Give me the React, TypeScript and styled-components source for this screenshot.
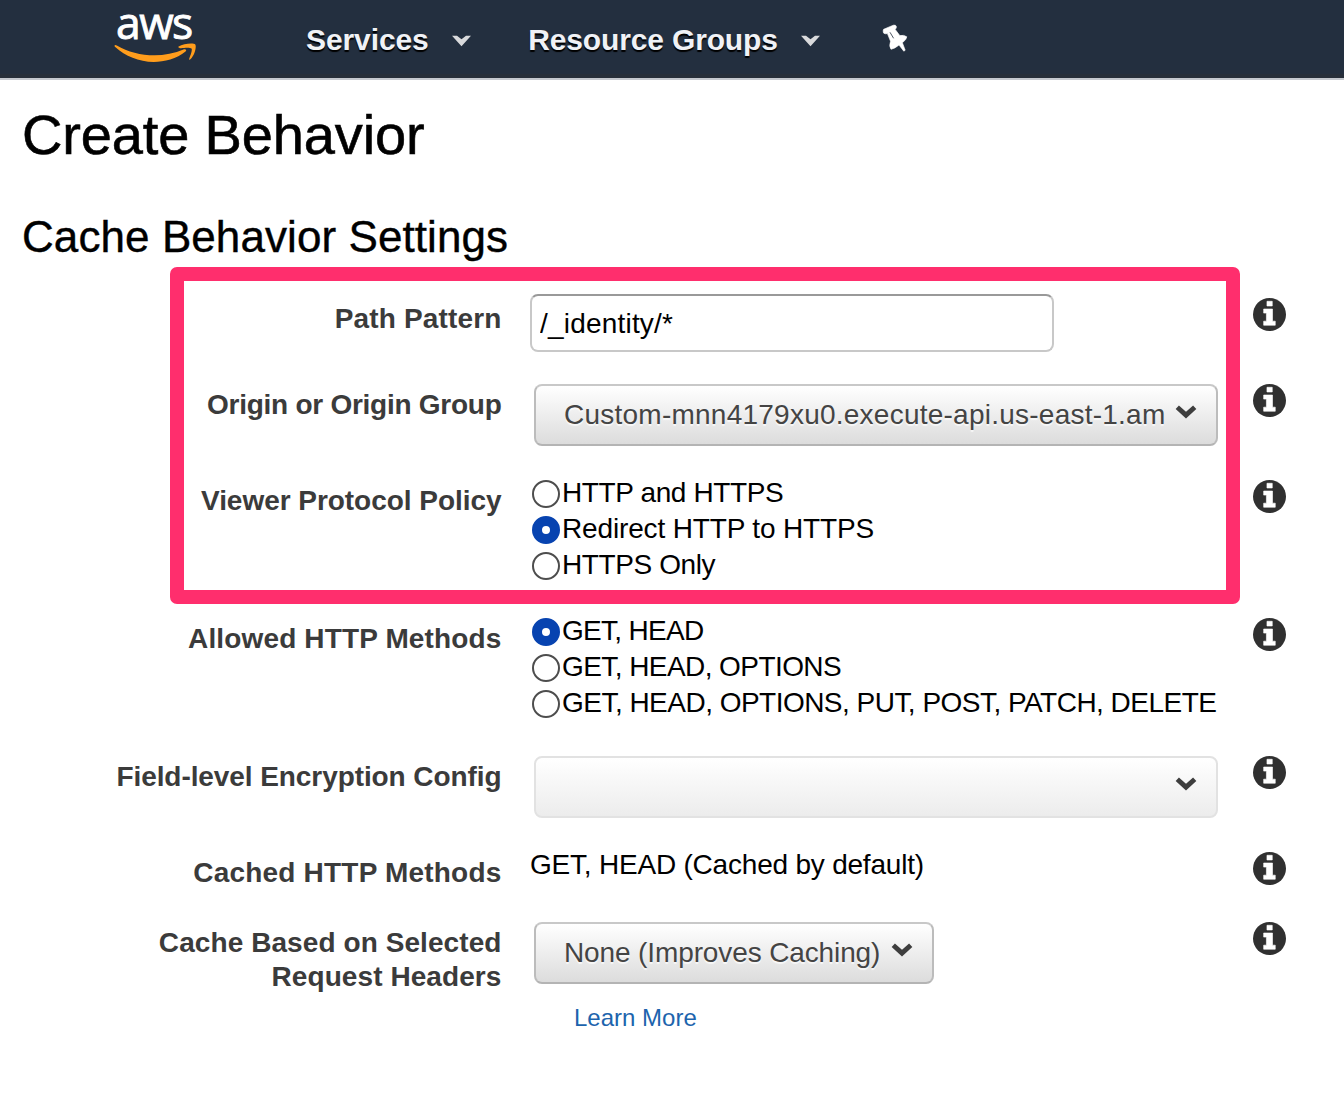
import React from "react";
import styled, { createGlobalStyle } from "styled-components";

const GlobalStyle = createGlobalStyle`
  * { box-sizing: border-box; }
  body {
    margin: 0;
    background: #fff;
    color: #000;
    font-family: "Liberation Sans", Arial, Helvetica, sans-serif;
    font-size: 28px;
  }
`;

const Page = styled.div`
  position: relative;
  width: 1344px;
  height: 1096px;
  background: #fff;
`;

const NavBar = styled.header`
  display: flex;
  align-items: flex-start;
  height: 80px;
  padding-left: 114px;
  background: #232f3f;
  border-bottom: 2px solid #c5c9cf;
  box-shadow: inset 0 -4px 0 #272f3a;
`;

const Logo = styled.div`
  display: flex;
  flex-direction: column;
  width: 82px;
  margin-right: 110px;
`;

const LogoWord = styled.span`
  height: 43px;
  padding-left: 2px;
  font-family: "Open Sans", "Noto Sans", sans-serif;
  font-size: 44.5px;
  font-weight: 400;
  line-height: 43px;
  letter-spacing: -1.6px;
  color: #fff;
  -webkit-text-stroke: 0.9px #fff;
`;

const NavItem = styled.div<{ $gap: number; $tracking?: number }>`
  display: flex;
  align-items: flex-start;
  gap: 23px;
  margin-right: ${(p) => p.$gap}px;
  color: #f0f2f6;
  font-size: 30px;
  font-weight: 700;
  line-height: 80px;
  letter-spacing: ${(p) => p.$tracking ?? 0}px;
  text-shadow: 0 2px 1px #000;
  white-space: nowrap;

  svg { margin-top: 35px; }
`;

const PinIcon = styled.svg`
  margin-top: 24px;
`;

const Title = styled.h1`
  margin: 23px 0 0 22px;
  font-size: 56px;
  font-weight: 400;
  line-height: 64px;
  letter-spacing: -0.15px;
  -webkit-text-stroke: 0.6px #000;
`;

const Subtitle = styled.h2`
  margin: 44px 0 0 22px;
  font-size: 44px;
  font-weight: 400;
  line-height: 52px;
  letter-spacing: 0.08px;
  -webkit-text-stroke: 0.4px #000;
`;

const Form = styled.main`
  margin-top: 29px;
`;

const Row = styled.section<{ $height: number }>`
  display: grid;
  grid-template-columns: 501.5px 722.5px 33px;
  column-gap: 29px;
  height: ${(p) => p.$height}px;
`;

const InfoCell = styled.div`
  margin-left: -29px;
  padding-top: 6px;

  svg { display: block; }
`;

const Label = styled.div<{ $tracking?: number }>`
  padding-top: 10px;
  color: #3b3b3b;
  font-weight: 700;
  line-height: 34px;
  text-align: right;
  white-space: nowrap;
  letter-spacing: ${(p) => p.$tracking ?? 0}px;
`;

const Control = styled.div<{ $top?: number; $left?: number }>`
  margin-left: -0.5px;
  padding: ${(p) => p.$top ?? 0}px 0 0 ${(p) => p.$left ?? 0}px;
`;

const TextInput = styled.input`
  display: block;
  width: 524px;
  height: 58px;
  padding: 2px 8px 0;
  border: 2px solid #c8c8c8;
  border-top-color: #999;
  border-radius: 8px;
  outline: none;
  background: #fff;
  color: #000;
  font: inherit;
  letter-spacing: 0.2px;
`;

const SelectButton = styled.button<{ $width: number; $tracking?: number }>`
  display: flex;
  align-items: flex-start;
  justify-content: space-between;
  width: ${(p) => p.$width}px;
  height: 62px;
  padding: 0 19px 0 28px;
  border: 2px solid #bdbdbd;
  border-color: #c8c8c8 #bcbcbc #b4b4b4;
  border-radius: 8px;
  background: linear-gradient(#fff, #dcdcdc);
  color: #444;
  font: inherit;
  line-height: 58px;
  white-space: nowrap;
  letter-spacing: ${(p) => p.$tracking ?? 0}px;
  text-shadow: 0 2px 1px rgba(255, 255, 255, 0.7);

  svg { margin-top: 19px; flex: none; }

  &:disabled {
    border-color: #e2e2e2;
    background: linear-gradient(#fff, #ececec);
  }
`;

const RadioOption = styled.label<{ $tracking?: number }>`
  display: flex;
  height: 36px;
  line-height: 38px;
  white-space: nowrap;
  letter-spacing: ${(p) => p.$tracking ?? 0}px;
`;

const Radio = styled.input`
  appearance: none;
  flex: none;
  width: 28px;
  height: 28px;
  margin: 6px 2px 0;
  border: 2px solid #4d4d4d;
  border-radius: 50%;
  background: #fff;

  &:checked {
    border: 10px solid #0743b0;
  }
`;

const StaticText = styled.div`
  line-height: 38px;
  letter-spacing: -0.21px;
`;

const LearnMore = styled.a`
  display: block;
  margin: 20px 0 0 40px;
  color: #1d64ad;
  font-size: 24px;
  line-height: 28px;
  text-decoration: none;
`;

const Highlight = styled.div`
  position: absolute;
  left: 170px;
  top: 267px;
  width: 1070px;
  height: 337px;
  border: 14px solid #ff2e6d;
  border-radius: 7px;
  pointer-events: none;
`;

const NavCaret = () => (
  <svg width="19" height="12" viewBox="0 0 19 12">
    <path d="M0 .8h5L9.500 4.200 14 .8h5L9.500 11.200z" fill="#d9dadc" />
  </svg>
);

const Chevron = () => (
  <svg width="22" height="14" viewBox="0 0 22 14">
    <path d="M2.300 2.300L11 10.100 19.700 2.300" fill="none" stroke="#3e3e3e" strokeWidth="4.900" />
  </svg>
);

const Info = () => (
  <InfoCell>
    <svg width="33" height="33" viewBox="0 128 1536 1536">
      <circle cx="768" cy="896" r="768" fill="#303030" />
      <path
        fill="#fff"
        stroke="#fff"
        strokeWidth="28"
        d="M1036 1396v-190h-128v-566h-412v190h128v376h-128v190zM896 500v-220h-246v220z"
      />
    </svg>
  </InfoCell>
);

type Option = { text: string; tracking: number; on?: boolean };

const protocols: Option[] = [
  { text: "HTTP and HTTPS", tracking: -0.38 },
  { text: "Redirect HTTP to HTTPS", tracking: -0.15, on: true },
  { text: "HTTPS Only", tracking: -0.4 },
];

const methods: Option[] = [
  { text: "GET, HEAD", tracking: -0.7, on: true },
  { text: "GET, HEAD, OPTIONS", tracking: -0.57 },
  { text: "GET, HEAD, OPTIONS, PUT, POST, PATCH, DELETE", tracking: -0.52 },
];

const RadioGroup = ({ name, options }: { name: string; options: Option[] }) => (
  <Control>
    {options.map((o) => (
      <RadioOption key={o.text} $tracking={o.tracking}>
        <Radio type="radio" name={name} defaultChecked={o.on} />
        {o.text}
      </RadioOption>
    ))}
  </Control>
);

export default function App() {
  return (
    <Page>
      <GlobalStyle />
      <NavBar>
        <Logo>
          <LogoWord>aws</LogoWord>
          <svg width="82" height="20" viewBox="0 0 82 20">
            <path
              d="M.5 2.800C.6 1.600 1.800 1.800 2.800 2.400c11 6.300 24 9.900 37.800 9.900 9.600 0 20-2 29.500-6 1.600-.7 3 1 1.400 2.200C62.800 15.600 50.300 19 39.700 19 24.800 19 11.300 13.200 1.200 4.100.8 3.700.5 3.200.5 2.800z"
              fill="#ff9d1c"
            />
            <path
              d="M64.600 3.500C69.500.2 80-.4 81.300 1.400c1.300 1.900-.3 10.700-4.900 14.900-.8.700-1.600.3-1.200-.6 1.100-2.800 3.500-8.700 2.300-10.100-1.100-1.500-7.500-.8-10.400-.4-1.400.2-3.600-1-2.500-1.700z"
              fill="#ff9d1c"
            />
          </svg>
        </Logo>
        <NavItem $gap={57.5} $tracking={-0.1}>
          Services
          <NavCaret />
        </NavItem>
        <NavItem $gap={62} $tracking={-0.14}>
          Resource Groups
          <NavCaret />
        </NavItem>
        <PinIcon width="26" height="30" viewBox="0 0 26 30">
          <path
            d="M1.600 5.300L11.300 1.200Q13.900.6 14.400 2.600 14.600 4.100 13.200 5.400L17.800 11.600Q22 10.600 24.800 12.800 24.700 15.200 20.400 18.800L23.200 26.200 21.800 27.200 17 21Q12.500 24.800 9 25.300 6.800 22.500 8.500 17.200L5.400 9.600Q3 10.300 1.500 8.900.7 6.700 1.600 5.300Z"
            fill="#fff"
            stroke="#fff"
            strokeWidth="0.6"
          />
          <path d="M8 8.300L11.600 14.300" stroke="#232f3f" strokeWidth="0.8" />
        </PinIcon>
      </NavBar>

      <Title>Create Behavior</Title>
      <Subtitle>Cache Behavior Settings</Subtitle>

      <Form>
        <Row $height={86}>
          <Label $tracking={0.15}>Path Pattern</Label>
          <Control $top={2}>
            <TextInput defaultValue="/_identity/*" />
          </Control>
          <Info />
        </Row>
        <Row $height={96}>
          <Label $tracking={-0.26}>Origin or Origin Group</Label>
          <Control $top={6} $left={4}>
            <SelectButton $width={684} $tracking={0.24}>
              Custom-mnn4179xu0.execute-api.us-east-1.am
              <Chevron />
            </SelectButton>
          </Control>
          <Info />
        </Row>
        <Row $height={138}>
          <Label $tracking={-0.04}>Viewer Protocol Policy</Label>
          <RadioGroup name="protocol" options={protocols} />
          <Info />
        </Row>
        <Row $height={138}>
          <Label $tracking={0.14}>Allowed HTTP Methods</Label>
          <RadioGroup name="methods" options={methods} />
          <Info />
        </Row>
        <Row $height={96}>
          <Label $tracking={-0.08}>Field-level Encryption Config</Label>
          <Control $top={6} $left={4}>
            <SelectButton $width={684} disabled>
              <span />
              <Chevron />
            </SelectButton>
          </Control>
          <Info />
        </Row>
        <Row $height={70}>
          <Label $tracking={0.2}>Cached HTTP Methods</Label>
          <Control>
            <StaticText>GET, HEAD (Cached by default)</StaticText>
          </Control>
          <Info />
        </Row>
        <Row $height={130}>
          <Label $tracking={0.08}>
            Cache Based on Selected
            <br />
            Request Headers
          </Label>
          <Control $top={6} $left={4}>
            <SelectButton $width={400} $tracking={-0.12}>
              None (Improves Caching)
              <Chevron />
            </SelectButton>
            <LearnMore>Learn More</LearnMore>
          </Control>
          <Info />
        </Row>
      </Form>
      <Highlight />
    </Page>
  );
}
